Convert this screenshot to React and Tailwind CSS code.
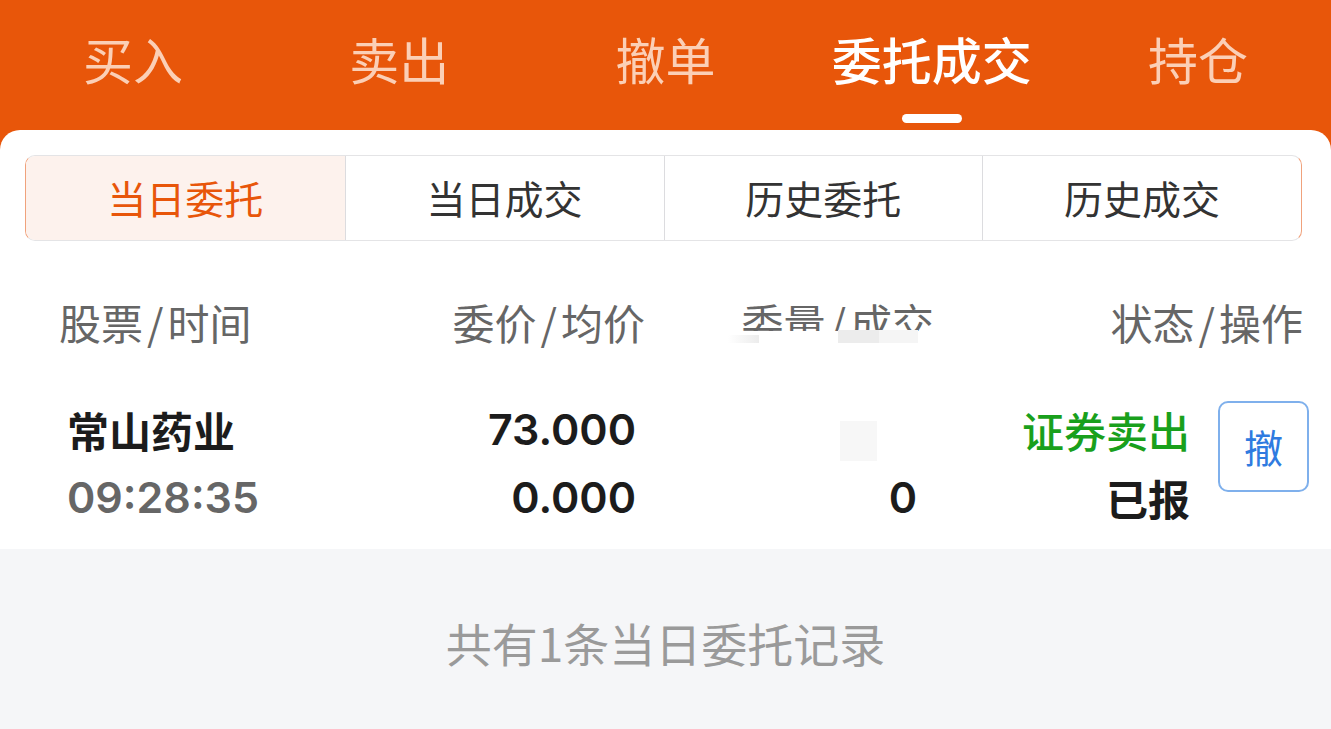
import { useState } from 'react';

const topTabs = ['买入', '卖出', '撤单', '委托成交', '持仓'];
const subTabs = ['当日委托', '当日成交', '历史委托', '历史成交'];

const cjk = { fontFamily: '"Noto Sans CJK SC", "Noto Sans", sans-serif' };
const num = { fontFamily: 'Inter, "Noto Sans CJK SC", sans-serif' };

// 表头文字（斜杠两侧留空）
function HeadText({ left, right }) {
  return (
    <>
      {left}
      <span className="mx-[4px]">/</span>
      {right}
    </>
  );
}

export default function App() {
  const [activeTop, setActiveTop] = useState(3);
  const [activeSub, setActiveSub] = useState(0);

  return (
    <div className="w-[1331px] h-[729px] overflow-hidden bg-[#e8560a] flex flex-col" style={cjk}>
      {/* 顶部标签 */}
      <div className="h-[130px] grid grid-cols-5 shrink-0">
        {topTabs.map((tab, i) => (
          <div
            key={tab}
            onClick={() => setActiveTop(i)}
            className="relative flex justify-center cursor-pointer"
          >
            <span
              className={`mt-[28px] text-[50px] leading-[60px] ${
                i === activeTop ? 'text-white font-medium' : 'text-[#fbcfb6]'
              }`}
            >
              {tab}
            </span>
            {i === activeTop && (
              <div className="absolute bottom-[7px] left-1/2 -translate-x-1/2 w-[60px] h-[9px] rounded-full bg-white" />
            )}
          </div>
        ))}
      </div>

      {/* 内容卡片 */}
      <div className="flex-1 bg-white rounded-t-[20px] flex flex-col">
        {/* 分段选择 */}
        <div className="ml-[25px] mr-[29px] mt-[25px] h-[86px] grid grid-cols-4 rounded-[10px] border border-[#e4e4e6] border-l-[#f0a27c] border-r-[#f0a27c] overflow-hidden">
          {subTabs.map((tab, i) => (
            <div
              key={tab}
              onClick={() => setActiveSub(i)}
              className={`flex items-center justify-center text-[39px] pb-[2px] cursor-pointer ${
                i > 0 ? 'border-l border-[#dcdcdf]' : ''
              } ${i === activeSub ? 'bg-[#fdf2ed] text-[#e8560a]' : 'text-[#333]'}`}
            >
              {tab}
            </div>
          ))}
        </div>

        {/* 表头 */}
        <div className="mt-[39px] h-[84px] flex items-center text-[42px] leading-[58px] text-[#666]">
          <div className="w-[345px] pl-[59px]">
            <HeadText left="股票" right="时间" />
          </div>
          <div className="w-[300px] text-right">
            <HeadText left="委价" right="均价" />
          </div>
          <div className="w-[289px] text-right">
            <span className="relative inline-block">
              <HeadText left="委量" right="成交" />
              <span className="absolute left-[-20px] right-[-20px] top-[38px] h-[20px] bg-white" />
              <span className="absolute left-[-14px] top-[42px] w-[31px] h-[8px] bg-gradient-to-r from-white to-[#ececec]" />
              <span className="absolute left-[96px] top-[37px] w-[41px] h-[13px] bg-[#ececec]" />
              <span className="absolute left-[137px] top-[37px] w-[39px] h-[13px] bg-[#f5f5f5]" />
            </span>
          </div>
          <div className="flex-1 pr-[28px] text-right">
            <HeadText left="状态" right="操作" />
          </div>
        </div>

        {/* 记录行 */}
        <div className="h-[185px] flex pt-[40px]">
          <div className="w-[345px] pl-[67px] flex flex-col">
            <div className="h-[50px] flex items-center text-[42px] font-semibold text-[#1c1c1c]">常山药业</div>
            <div className="h-[50px] mt-[18px] flex items-center text-[43px] font-semibold text-[#666]" style={num}>
              09:28:35
            </div>
          </div>
          <div className="w-[291px] flex flex-col items-end" style={num}>
            <div className="h-[50px] flex items-center text-[43px] font-semibold text-[#1c1c1c]">73.000</div>
            <div className="h-[50px] mt-[18px] flex items-center text-[43px] font-semibold text-[#1c1c1c]">0.000</div>
          </div>
          <div className="w-[281px] flex flex-col items-end" style={num}>
            <div className="h-[50px] flex items-start">
              <div className="w-[37px] h-[40px] mt-[17px] mr-[40px] bg-[#f7f7f7]" />
            </div>
            <div className="h-[50px] mt-[18px] flex items-center text-[43px] font-semibold text-[#1c1c1c]">0</div>
          </div>
          <div className="w-[273px] flex flex-col items-end">
            <div className="h-[50px] flex items-center text-[42px] font-medium text-[#19a01c]">证券卖出</div>
            <div className="h-[50px] mt-[18px] flex items-center text-[42px] font-semibold text-[#1c1c1c]">已报</div>
          </div>
          <div className="pl-[28px]">
            <button className="mt-[-3px] w-[91px] h-[91px] rounded-[10px] border-2 border-[#7fb0ec] text-[39px] text-[#2f7be0] flex items-center justify-center">
              撤
            </button>
          </div>
        </div>

        {/* 底部提示 */}
        <div className="flex-1 bg-[#f5f6f8] flex items-center justify-center pt-[6px]">
          <span className="text-[46px] text-[#9a9a9a]">共有1条当日委托记录</span>
        </div>
      </div>
    </div>
  );
}
